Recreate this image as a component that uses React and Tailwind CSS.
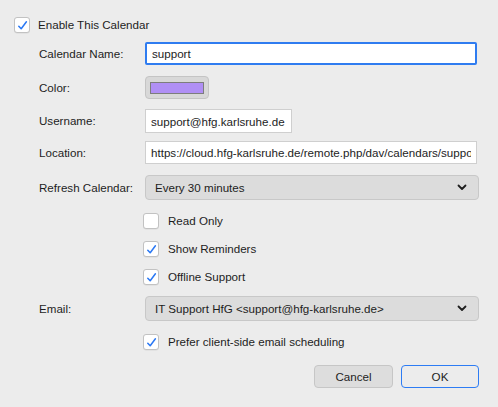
import { useState } from 'react';

function Check({ checked, onChange }) {
  return (
    <button
      type="button"
      onClick={onChange}
      className="w-4 h-4 shrink-0 flex items-center justify-center bg-white border border-[#c2c2c2] rounded-[3px] shadow-[0_0.5px_0.5px_rgba(0,0,0,0.08)]"
    >
      {checked && (
        <svg width="11" height="11" viewBox="0 0 11 11" fill="none">
          <path d="M1.8 6.2 L4.2 8.8 L9.4 1.8" stroke="#2a78f4" strokeWidth="1.5" strokeLinecap="round" strokeLinejoin="round" />
        </svg>
      )}
    </button>
  );
}

function Chevron() {
  return (
    <svg width="10" height="7" viewBox="0 0 10 7" fill="none">
      <path d="M1.5 1.5 L5 5 L8.5 1.5" stroke="#1e1e1e" strokeWidth="1.8" strokeLinecap="round" strokeLinejoin="round" />
    </svg>
  );
}

function Label({ children }) {
  return <div className="w-[145px] shrink-0 pl-[39px] whitespace-nowrap">{children}</div>;
}

function Select({ value }) {
  return (
    <div className="w-[334px] h-[25px] flex items-center justify-between pl-[9px] pr-[11px] bg-[#dcdcdc] border border-[#c8c8c8] rounded-[4px]">
      <span className="whitespace-nowrap">{value}</span>
      <Chevron />
    </div>
  );
}

export default function App() {
  const [opts, setOpts] = useState({
    enabled: true,
    readOnly: false,
    reminders: true,
    offline: true,
    clientSide: true,
  });
  const toggle = (k) => setOpts((o) => ({ ...o, [k]: !o[k] }));

  return (
    <div
      className="w-[498px] h-[407px] overflow-hidden bg-[#ececec] text-[#1d1d1d] text-[11.6px] leading-none"
      style={{ fontFamily: '"Liberation Sans", Arial, sans-serif' }}
    >
      {/* master switch */}
      <div className="flex items-center gap-2 pl-[14px] pt-[17px]">
        <Check checked={opts.enabled} onChange={() => toggle('enabled')} />
        <span>Enable This Calendar</span>
      </div>

      {/* account fields */}
      <div className="flex items-center mt-[9px]">
        <Label>Calendar Name:</Label>
        <input
          defaultValue="support"
          className="w-[332px] h-[23px] px-[5px] bg-white border-2 border-[#2f7cf0] rounded-[2px] outline-none"
        />
      </div>

      <div className="flex items-center mt-[11px]">
        <Label>Color:</Label>
        <div className="w-[64px] h-[23px] flex items-center justify-center bg-[#d8d8d8] border border-[#c4c4c4] rounded-[4px]">
          <div className="w-[54px] h-[12px] bg-[#b08ff5] border border-[#7d7d7d]" />
        </div>
      </div>

      <div className="flex items-center mt-[10px]">
        <Label>Username:</Label>
        <input
          defaultValue="support@hfg.karlsruhe.de"
          className="w-[147px] h-[24px] px-[5px] bg-white border border-[#cfcfcf] outline-none"
        />
      </div>

      <div className="flex items-center mt-[8px]">
        <Label>Location:</Label>
        <input
          defaultValue="https://cloud.hfg-karlsruhe.de/remote.php/dav/calendars/support/"
          className="w-[332px] h-[23px] px-[5px] bg-white border border-[#cfcfcf] outline-none"
        />
      </div>

      <div className="flex items-center mt-[11px]">
        <Label>Refresh Calendar:</Label>
        <Select value="Every 30 minutes" />
      </div>

      {/* calendar options */}
      <div className="flex flex-col gap-3 pl-[143px] mt-[13px]">
        <div className="flex items-center gap-[9px]">
          <Check checked={opts.readOnly} onChange={() => toggle('readOnly')} />
          <span>Read Only</span>
        </div>
        <div className="flex items-center gap-[9px]">
          <Check checked={opts.reminders} onChange={() => toggle('reminders')} />
          <span>Show Reminders</span>
        </div>
        <div className="flex items-center gap-[9px]">
          <Check checked={opts.offline} onChange={() => toggle('offline')} />
          <span>Offline Support</span>
        </div>
      </div>

      <div className="flex items-center mt-[11px]">
        <Label>Email:</Label>
        <Select value="IT Support HfG <support@hfg-karlsruhe.de>" />
      </div>

      <div className="flex items-center gap-[9px] pl-[143px] mt-[13px]">
        <Check checked={opts.clientSide} onChange={() => toggle('clientSide')} />
        <span>Prefer client-side email scheduling</span>
      </div>

      {/* dialog actions */}
      <div className="flex justify-end gap-2 pr-[19px] mt-[15px]">
        <button className="w-[79px] h-[23px] bg-[#dddddd] border border-[#c6c6c6] rounded-[4px]">Cancel</button>
        <button className="w-[78px] h-[23px] bg-[#ececec] border border-[#2d7cf4] rounded-[4px]">OK</button>
      </div>
    </div>
  );
}
